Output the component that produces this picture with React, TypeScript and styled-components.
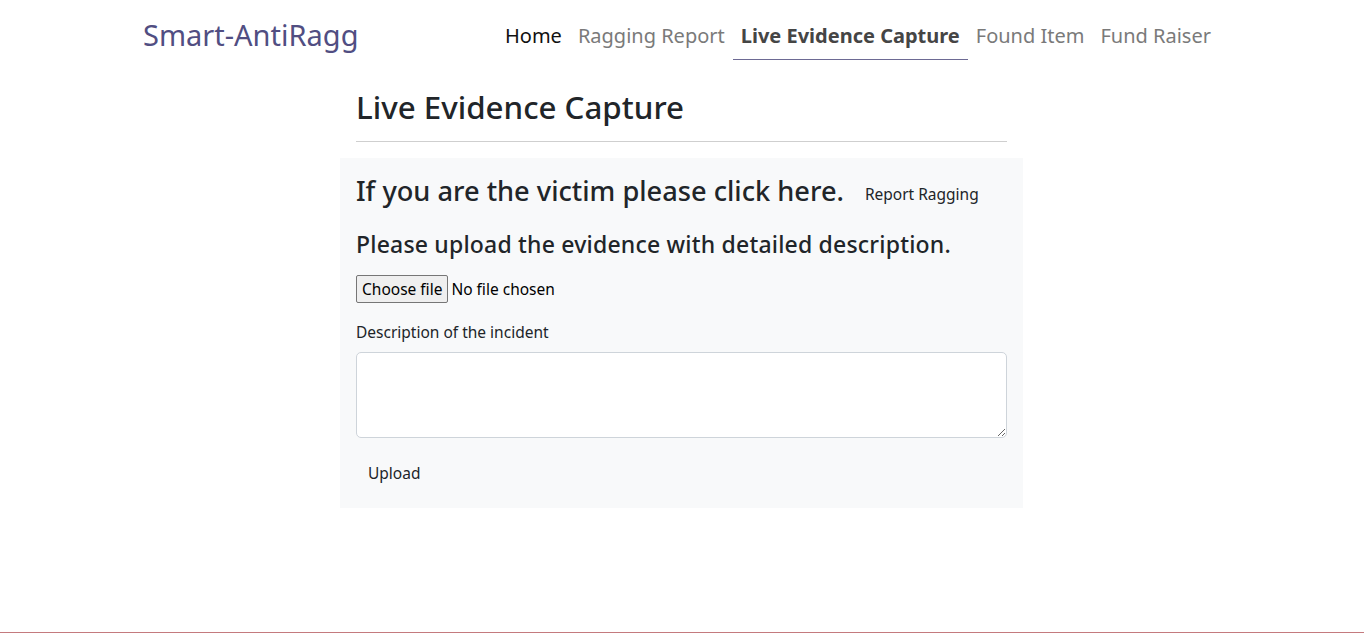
import React from "react";
import styled, { createGlobalStyle } from "styled-components";

const Global = createGlobalStyle`
  html, body { margin: 0; padding: 0; background: #fff; }
  body { font-family: "Noto Sans", "Open Sans", sans-serif; color: #212529; }
  * { box-sizing: border-box; }
`;

const Page = styled.div`
  min-height: 633px;
  display: flex;
  flex-direction: column;
`;

const NavBar = styled.nav`
  height: 72px;
  display: flex;
  align-items: flex-start;
  justify-content: space-between;
  padding: 0 145px 0 143px;
`;

const Brand = styled.a`
  font-size: 29px;
  line-height: 40px;
  margin-top: 15px;
  color: #514e82;
  text-decoration: none;
`;

const NavList = styled.ul`
  display: flex;
  list-style: none;
  margin: 0;
  padding: 0;
`;

const NavLink = styled.a<{ $active?: boolean; $home?: boolean }>`
  display: flex;
  align-items: flex-end;
  height: 60px;
  padding: 0 8px 9px;
  font-size: 20px;
  line-height: 28px;
  text-decoration: none;
  font-weight: ${(p) => (p.$active ? 700 : 400)};
  color: ${(p) => (p.$active ? "#454545" : p.$home ? "#111" : "#7a7a7a")};
  border-bottom: 1px solid ${(p) => (p.$active ? "#6d6a94" : "transparent")};
`;

const Main = styled.main`
  flex: 1;
  width: 683px;
  margin-left: calc(50% - 342px);
  padding-top: 10px;
`;

const Header = styled.div`
  margin: 0 16px 16px;
  border-bottom: 1px solid #cfcfcf;
  padding-bottom: 9px;
`;

const Title = styled.h1`
  margin: 0;
  font-size: 31.3px;
  font-weight: 500;
  line-height: 50px;
  color: #212529;
`;

const Card = styled.section`
  background: #f8f9fa;
  padding: 14px 16px 18px;
`;

const VictimRow = styled.div`
  display: flex;
  align-items: flex-start;
  gap: 9px;
  height: 38px;
`;

const H2 = styled.h2`
  margin: 0;
  font-size: 27.2px;
  font-weight: 500;
  line-height: 38px;
`;

const H3 = styled.h3`
  margin: 18px 0 15px;
  font-size: 23px;
  font-weight: 500;
  letter-spacing: 0.2px;
  line-height: 32px;
`;

const PlainButton = styled.button<{ $drop?: number }>`
  background: transparent;
  border: none;
  font-family: inherit;
  font-size: 15.5px;
  line-height: 21px;
  color: #212529;
  padding: 6px 12px;
  margin-top: ${(p) => p.$drop ?? 0}px;
  cursor: pointer;
`;

const FileRow = styled.div`
  display: flex;
  align-items: center;
  height: 28px;
`;

const FileButton = styled.span`
  display: inline-flex;
  align-items: center;
  height: 28px;
  padding: 0 5px;
  border: 1px solid #767676;
  border-radius: 2px;
  background: #efefef;
  font-size: 15.5px;
  color: #000;
`;

const FileText = styled.span`
  font-size: 15.5px;
  margin-left: 3px;
  color: #000;
`;

const Label = styled.label`
  display: block;
  margin-top: 18px;
  margin-bottom: 9px;
  font-size: 15.5px;
`;

const TextArea = styled.textarea`
  display: block;
  width: 100%;
  height: 86px;
  border: 1px solid #ced4da;
  border-radius: 5px;
  background: #fff;
  font-family: inherit;
  resize: vertical;
`;

const UploadRow = styled.div`
  margin-top: 19px;
`;

const Footer = styled.footer`
  height: 1px;
  background: #c47a7e;
`;

export default function App() {
  return (
    <Page>
      <Global />
      <NavBar>
        <Brand href="#">Smart-AntiRagg</Brand>
        <NavList>
          <li><NavLink href="#" $home>Home</NavLink></li>
          <li><NavLink href="#">Ragging Report</NavLink></li>
          <li><NavLink href="#" $active>Live Evidence Capture</NavLink></li>
          <li><NavLink href="#">Found Item</NavLink></li>
          <li><NavLink href="#">Fund Raiser</NavLink></li>
        </NavList>
      </NavBar>
      <Main>
        <Header>
          <Title>Live Evidence Capture</Title>
        </Header>
        <Card>
          <VictimRow>
            <H2>If you are the victim please click here.</H2>
            <PlainButton $drop={6}>Report Ragging</PlainButton>
          </VictimRow>
          <H3>Please upload the evidence with detailed description.</H3>
          <FileRow>
            <FileButton>Choose file</FileButton>
            <FileText>No file chosen</FileText>
          </FileRow>
          <Label>Description of the incident</Label>
          <TextArea />
          <UploadRow>
            <PlainButton>Upload</PlainButton>
          </UploadRow>
        </Card>
      </Main>
      <Footer />
    </Page>
  );
}
